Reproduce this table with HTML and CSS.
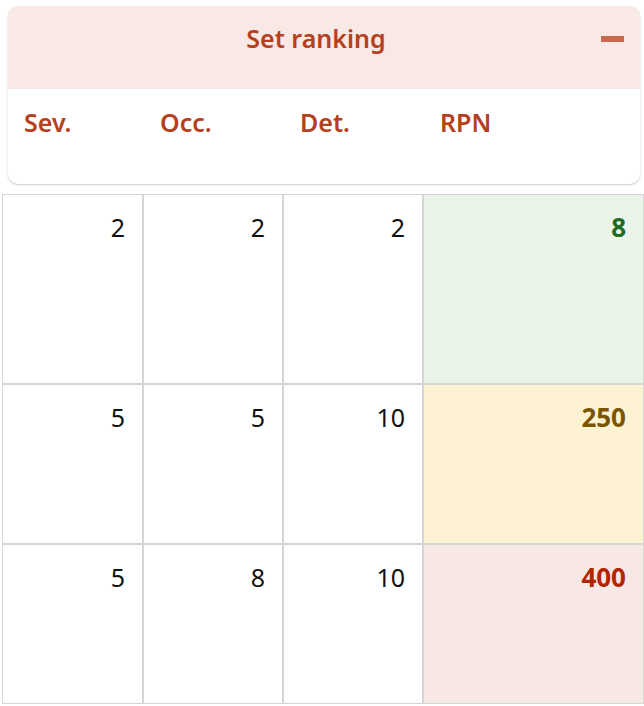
FILE: index.html
```html
<!DOCTYPE html>
<html>
<head>
<meta charset="utf-8">
<link rel="stylesheet" href="styles.css">
</head>
<body>
<div class="card">
  <div class="card-head">
    <div class="title">Set ranking</div>
    <button class="collapse" aria-label="Collapse"><span class="bar"></span></button>
  </div>
  <div class="labels">
    <span>Sev.</span>
    <span>Occ.</span>
    <span>Det.</span>
    <span>RPN</span>
  </div>
</div>
<table class="grid">
  <tr class="r1">
    <td>2</td><td>2</td><td>2</td><td class="rpn low">8</td>
  </tr>
  <tr class="r2">
    <td>5</td><td>5</td><td>10</td><td class="rpn mid">250</td>
  </tr>
  <tr class="r3">
    <td>5</td><td>8</td><td>10</td><td class="rpn high">400</td>
  </tr>
</table>
</body>
</html>
```
FILE: styles.css
```css
html, body {
  margin: 0;
  padding: 0;
  background: #ffffff;
  font-family: "Noto Sans", "Open Sans", sans-serif;
}
body {
  overflow: hidden;
  width: 644px;
  height: 706px;
}
.card {
  margin: 6px 4px 0 8px;
  border-radius: 10px;
  background: #ffffff;
  box-shadow: 0 1px 2px rgba(0,0,0,0.22);
  overflow: hidden;
  height: 178px;
}
.card-head {
  height: 83px;
  background: #f8e9e6;
  display: flex;
  align-items: flex-start;
  padding: 0 16px 0 23px;
}
.title {
  flex: 1;
  text-align: center;
  color: #b5401e;
  font-size: 25px;
  font-weight: 600;
  line-height: 30px;
  padding-top: 17px;
}
.collapse {
  border: 0;
  background: transparent;
  padding: 0;
  margin-top: 24px;
  width: 23px;
  height: 18px;
  display: flex;
  align-items: center;
  cursor: pointer;
}
.bar {
  display: block;
  width: 23px;
  height: 6px;
  background: #c8694f;
}
.labels {
  display: grid;
  grid-template-columns: 136px 140px 140px auto;
  padding: 18px 16px 0 16px;
  color: #b5401e;
  font-size: 25px;
  font-weight: 600;
  line-height: 30px;
}
.grid {
  border-collapse: separate;
  border-spacing: 0;
  margin: 10px 0 0 2px;
  table-layout: fixed;
  width: 642px;
  font-size: 25px;
}
.grid td {
  border: 1px solid #d6d6d6;
  vertical-align: top;
  text-align: right;
  padding: 17px 17px 0 0;
  line-height: 30px;
  color: #111111;
  width: 140px;
  box-sizing: border-box;
}
.grid td:first-child {
  width: 141px;
}
.grid td.rpn {
  width: 221px;
  font-weight: 700;
  font-size: 26px;
}
.r1 td { height: 190px; }
.r2 td { height: 160px; }
.r3 td { height: 160px; }
.low { background: #eaf4e8; color: #1f6b22 !important; }
.mid { background: #fdf3d3; color: #7a5400 !important; }
.high { background: #f7e8e5; color: #b32400 !important; }
```
